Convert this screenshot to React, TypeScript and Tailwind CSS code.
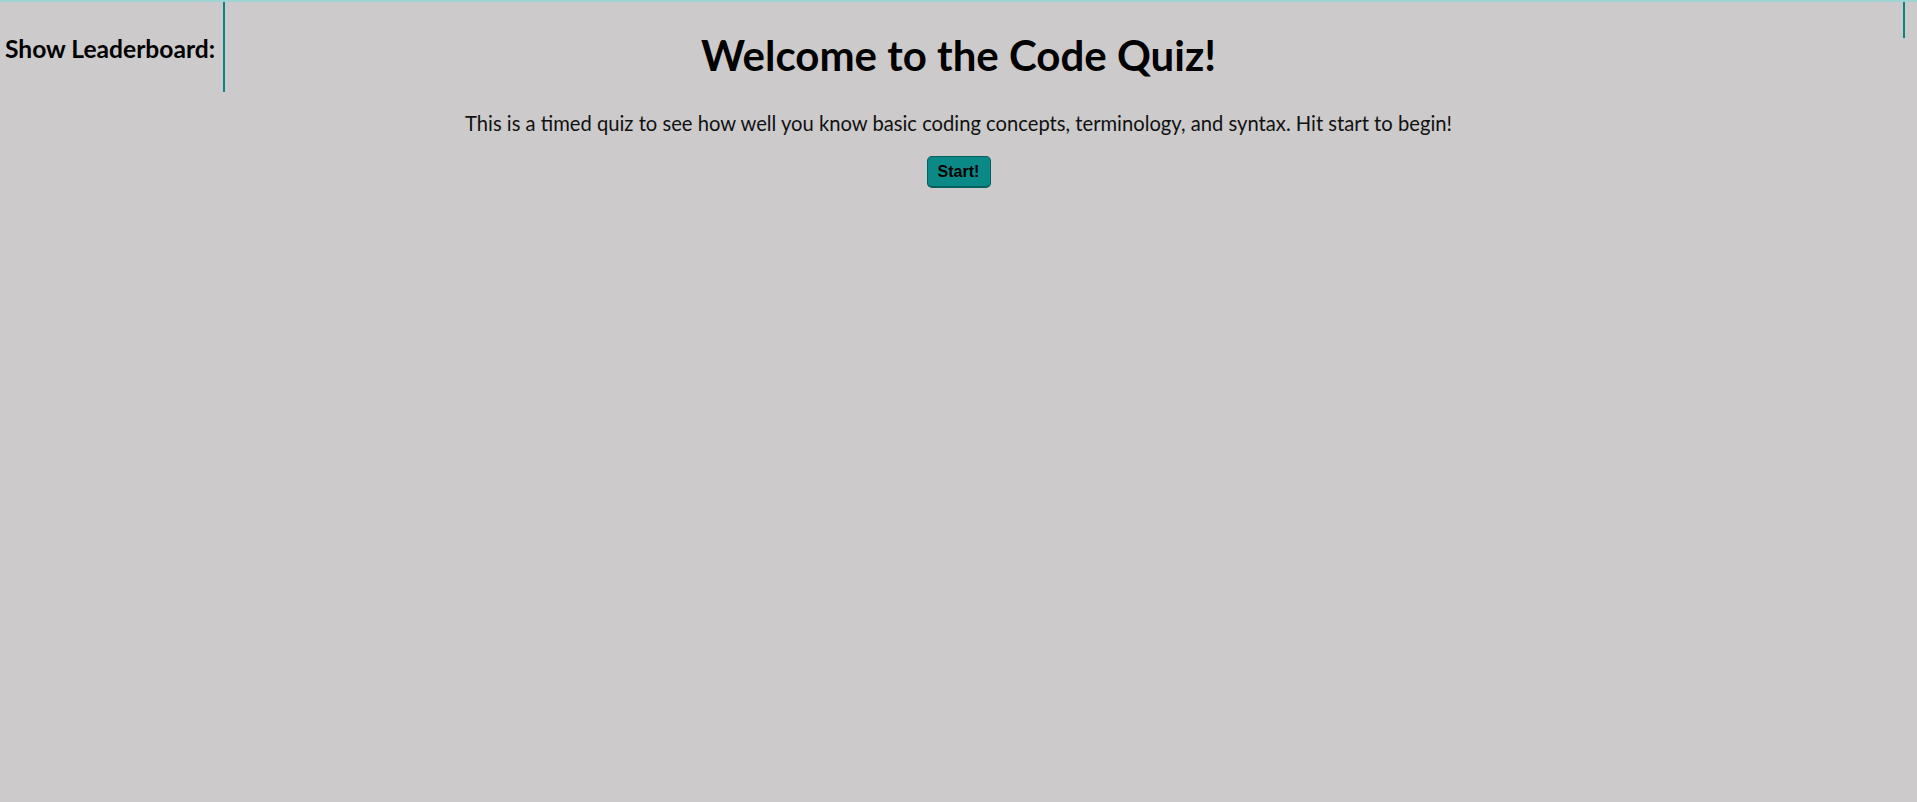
export default function App() {
  return (
    <div className="min-h-[802px] w-full bg-[#cccacb] border-t-2 border-[#9fd4d4] text-black font-['Lato','Noto_Sans',sans-serif]">
      {/* header: leaderboard / title / timer */}
      <header className="grid grid-cols-[1fr_auto_1fr] items-start">
        <div className="justify-self-start flex items-center h-[90px] w-[225px] pl-[5px] border-r-2 border-[#0a8582]">
          <h3 className="mt-[3px] text-[24.6px] leading-[28px] font-bold whitespace-nowrap">Show Leaderboard:</h3>
        </div>
        <h1 className="mt-[28px] text-[42px] leading-[50px] font-bold text-center">Welcome to the Code Quiz!</h1>
        <div className="justify-self-end h-[36px] w-[14px] border-l-2 border-[#0a8582]" />
      </header>

      <main className="flex flex-col items-center">
        <p className="mt-[19px] text-[20.2px] leading-[24px] text-[#111]">
          This is a timed quiz to see how well you know basic coding concepts, terminology, and syntax. Hit start to begin!
        </p>
        <button className="mt-[21px] w-[64px] h-[32px] rounded-[5px] bg-[#0b8987] border border-[#05605e] border-b-2 text-[16px] font-bold text-black font-['Liberation_Sans',Arial,sans-serif]">
          Start!
        </button>
      </main>
    </div>
  );
}
